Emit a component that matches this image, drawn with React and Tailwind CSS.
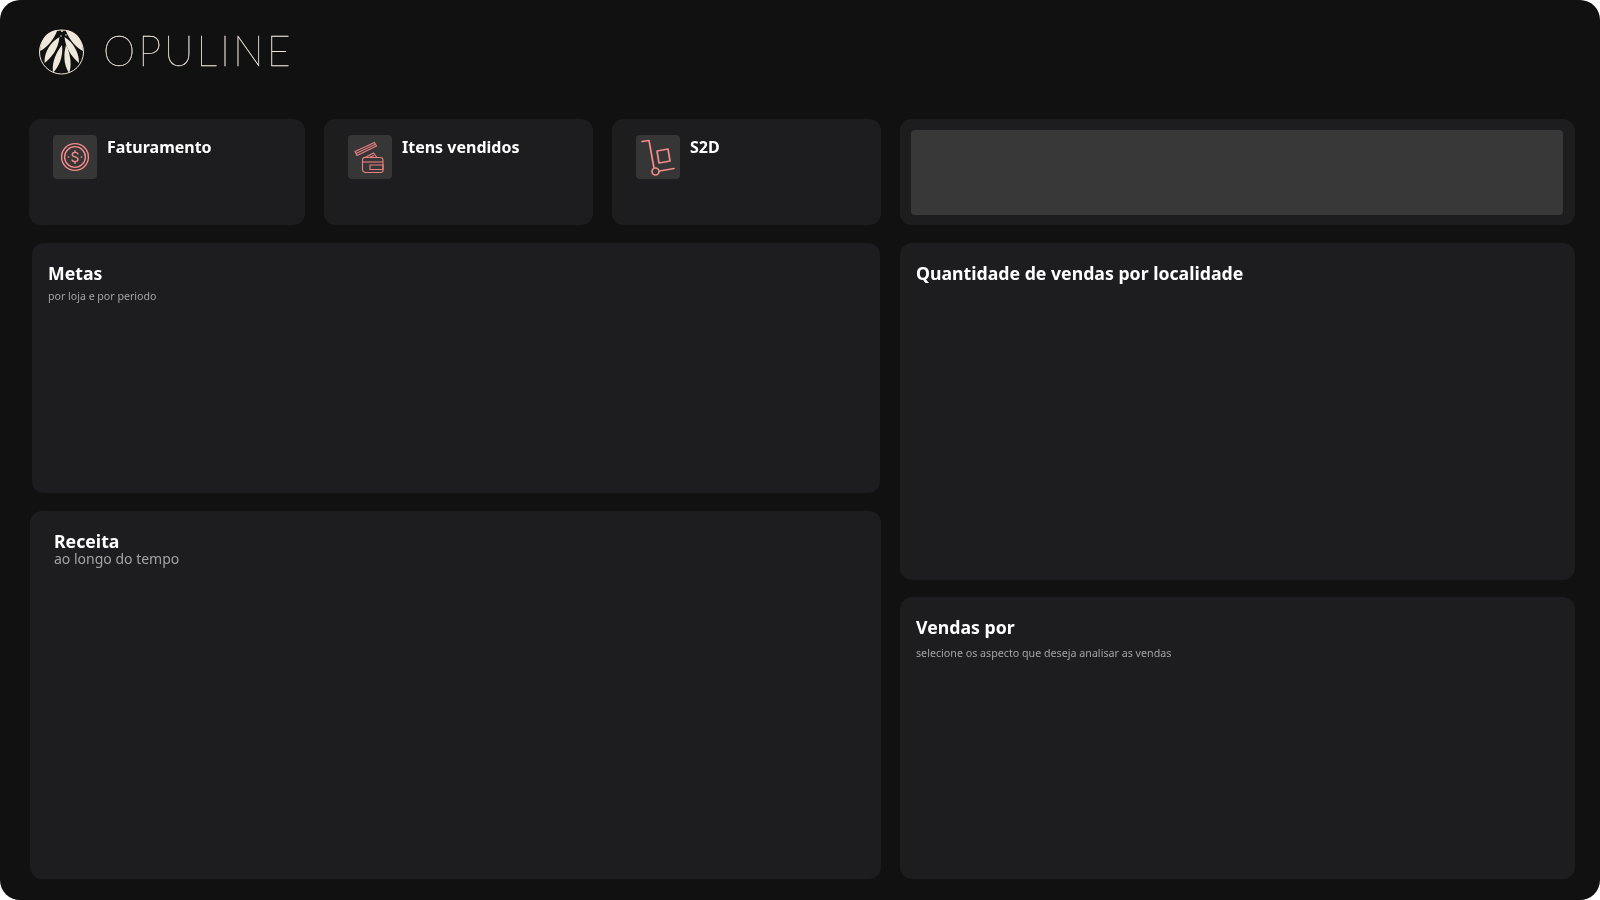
import React from 'react';

const cream = '#efe8da';

const Logo = () => (
  <svg width="46" height="48" viewBox="0 0 46 48" fill="none">
    <circle cx="22.500" cy="25" r="22" stroke={cream} strokeWidth="1" />
    <path d="M18.500 3 C9 3.500 1.500 11 1 24 C7 21.500 15 12.500 18.500 3 Z" fill={cream} />
    <path d="M20.500 10 C12.500 14.500 5 24 5.500 36 C12 31 19.500 22 20.500 10 Z" fill={cream} />
    <path d="M23 18 C17.500 25 12.500 35 14 45.500 C19.500 40.500 24.500 30 23 18 Z" fill={cream} />
    <path d="M27 18 C24.500 27 24.500 38 30 46 C32.500 41 32.500 28.500 27 18 Z" fill={cream} />
    <path d="M26.500 3 C36 3.500 43.500 11 44 24 C38 21.500 30 12.500 26.500 3 Z" fill={cream} />
    <path d="M25.500 10 C33 14.500 40 24 40 36 C34 31 26.500 22 25.500 10 Z" fill={cream} />
    <circle cx="23" cy="4" r="1" fill={cream} />
    <circle cx="27" cy="8" r="0.800" fill={cream} />
    <circle cx="22" cy="9" r="0.800" fill={cream} />
  </svg>
);

const CoinIcon = () => (
  <svg width="30" height="30" viewBox="0 0 30 30" fill="none" stroke="#f58a8a" strokeWidth="1.400" strokeLinecap="round">
    <circle cx="15" cy="15" r="13.400" />
    <circle cx="15" cy="15" r="10.400" />
    <path d="M18 11.800 C17.400 10.800 16.300 10.400 15 10.400 C13.300 10.400 12.200 11.300 12.200 12.600 C12.200 15.600 18 14.200 18 17.300 C18 18.700 16.700 19.600 15 19.600 C13.600 19.600 12.500 19.100 12 18.100" />
    <path d="M15 8.600 V10.400 M15 19.600 V21.400" />
    <path d="M8.400 15 H8.600 M21.400 15 H21.600" strokeWidth="1.600" />
  </svg>
);

const CosmeticIcon = () => (
  <svg width="32" height="32" viewBox="0 0 32 32" fill="none" stroke="#e98080" strokeWidth="1.100">
    <path d="M1 10.500 L20.500 1.500 L22.500 5 L3 14.500 Z" />
    <path d="M2 12.500 L21.500 3.300" />
    <path d="M11 16.500 L19.500 12 L23 16.500 M15 16.500 L20 14.500" />
    <path d="M9 16.500 H26 Q29 16.500 29 19 V30 Q29 31.500 26 31.500 H12 Q8.500 31.500 8.500 28 V19 Q8.500 16.500 11 16.500" />
    <path d="M8.500 21 H29" />
    <path d="M16 24 H29 V28.500 H16 Z" />
  </svg>
);

const TrolleyIcon = () => (
  <svg width="34" height="38" viewBox="0 0 34 38" fill="none" stroke="#f58a8a" strokeWidth="1.700" strokeLinecap="round" strokeLinejoin="round">
    <path d="M1 3.500 L8 2.500 L13 30" />
    <path d="M18.500 33 L33 30.500" />
    <circle cx="14.500" cy="33.500" r="3.500" />
    <path d="M16 13 L27 11 L29 23 L18 25 Z" />
  </svg>
);

const StatCard = ({ icon, title, className }) => (
  <div className={`h-[106px] rounded-xl bg-[#1d1d1f] pl-6 pt-4 flex gap-2.5 ${className}`}>
    <div className="w-11 h-11 rounded-[4px] bg-[#363636] flex items-center justify-center shrink-0">{icon}</div>
    <h3 className="text-base leading-6 font-bold text-white">{title}</h3>
  </div>
);

export default function App() {
  return (
    <div className="w-[1600px] h-[900px] bg-white font-['Noto_Sans',sans-serif]">
      <div className="w-full h-full rounded-[20px] bg-[#111111] overflow-hidden [will-change:transform]">
        {/* logo */}
        <header className="h-[119px] pl-[39px] pt-[27px] flex items-start gap-[18px]">
          <Logo />
          <span className="font-['Lato',sans-serif] font-thin text-[41px] leading-[48px] tracking-[3px] text-[#f0e9da] [-webkit-text-stroke:0.3px_#f0e9da]">OPULINE</span>
        </header>

        <main className="flex gap-[19px] pl-[29px]">
          {/* left column */}
          <div className="w-[852px] flex flex-col gap-[18px]">
            <div className="flex gap-[19px]">
              <StatCard className="w-[276px]" icon={<CoinIcon />} title="Faturamento" />
              <StatCard className="w-[269px]" icon={<CosmeticIcon />} title="Itens vendidos" />
              <StatCard className="w-[269px]" icon={<TrolleyIcon />} title="S2D" />
            </div>
            <section className="h-[250px] ml-[3px] mr-px rounded-xl bg-[#1d1d1f] pl-4 pt-[18px]">
              <h2 className="text-[17.700px] leading-6 font-bold text-white">Metas</h2>
              <p className="mt-[3px] text-[10.600px] leading-4 text-[#a3a3a3]">por loja e por periodo</p>
            </section>
            <section className="h-[368px] ml-px rounded-xl bg-[#1d1d1f] pl-6 pt-[21px]">
              <h2 className="text-[17.700px] leading-[18px] font-bold text-white">Receita</h2>
              <p className="text-sm leading-[18px] text-[#a3a3a3]">ao longo do tempo</p>
            </section>
          </div>

          {/* right column */}
          <div className="w-[675px] flex flex-col">
            <div className="h-[106px] rounded-xl bg-[#1d1d1f] pl-[11px] pr-3 py-[11px]">
              <div className="h-[85px] rounded-[4px] bg-[#383838]" />
            </div>
            <section className="h-[337px] mt-[18px] rounded-xl bg-[#1d1d1f] pl-4 pt-[18px]">
              <h2 className="text-[17.700px] leading-6 font-bold text-white">Quantidade de vendas por localidade</h2>
            </section>
            <section className="h-[282px] mt-[17px] rounded-xl bg-[#1d1d1f] pl-4 pt-[18px]">
              <h2 className="text-[17.700px] leading-6 font-bold text-white">Vendas por</h2>
              <p className="mt-1.5 text-[10.700px] leading-4 text-[#a3a3a3]">selecione os aspecto que deseja analisar as vendas</p>
            </section>
          </div>
        </main>
      </div>
    </div>
  );
}
